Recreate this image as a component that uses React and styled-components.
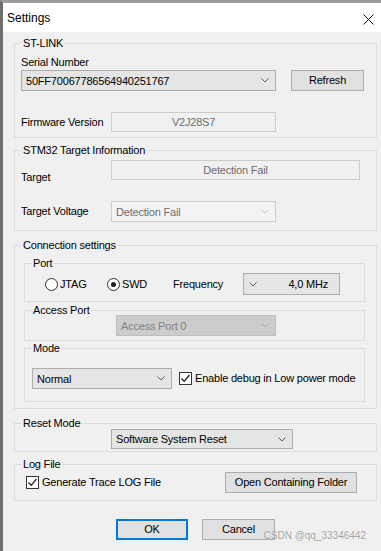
import React from "react";
import styled, { createGlobalStyle } from "styled-components";

const GlobalStyle = createGlobalStyle`
  html, body {
    margin: 0;
    padding: 0;
    background: #f0f0f0;
  }
  * {
    box-sizing: border-box;
  }
`;

const Chevron = ({ color = "#606060" }) => (
  <svg width="8" height="5" viewBox="0 0 8 5">
    <polyline points="0.5,0.5 4,4 7.5,0.5" fill="none" stroke={color} strokeWidth="1" />
  </svg>
);

const CheckMark = () => (
  <svg width="11" height="11" viewBox="0 0 11 11">
    <polyline points="1.5,5.5 4.2,8.3 9.5,2" fill="none" stroke="#222" strokeWidth="1.3" />
  </svg>
);

const App = () => {
  return (
    <>
      <GlobalStyle />
      <Window>
        <TitleBar>
          <Title>Settings</Title>
          <CloseIcon width="11" height="11" viewBox="0 0 11 11">
            <path d="M0.5 0.5 L10.5 10.5 M10.5 0.5 L0.5 10.5" stroke="#111" strokeWidth="1" />
          </CloseIcon>
        </TitleBar>

        <Content>
          {/* ST-LINK */}
          <Group $pad="12px 0 5px 6px">
            <Legend>ST-LINK</Legend>
            <Label>Serial Number</Label>
            <Row $mt={1} $gap={15}>
              <Combo $w={255} $h={21}>
                <ComboText>50FF70067786564940251767</ComboText>
                <Chevron />
              </Combo>
              <Button $w={73}>Refresh</Button>
            </Row>
            <Row $mt={21}>
              <Label $w={90}>Firmware Version</Label>
              <Field $w={165}>V2J28S7</Field>
            </Row>
          </Group>

          {/* STM32 */}
          <Group $mt={12} $pad="9px 0 8px 6px">
            <Legend>STM32 Target Information</Legend>
            <Row $align="flex-start" $h={20}>
              <Label $w={90} $mt={11}>Target</Label>
              <Field $w={249}>Detection Fail</Field>
            </Row>
            <Row $mt={21}>
              <Label $w={90}>Target Voltage</Label>
              <Combo $w={165} $h={21} $variant="disabled">
                <ComboText>Detection Fail</ComboText>
                <Chevron color="#c4c4c4" />
              </Combo>
            </Row>
          </Group>

          {/* Connection settings */}
          <Group $mt={14} $pad="17px 11px 6px 9px">
            <Legend>Connection settings</Legend>

            <Group $pad="9px 0 6px 20px">
              <Legend>Port</Legend>
              <RadioRow>
                <RadioItem>
                  <RadioCircle />
                  JTAG
                </RadioItem>
                <RadioItem>
                  <RadioCircle $checked />
                  SWD
                </RadioItem>
                <Label>Frequency</Label>
                <Combo $w={97} $h={22} $reverse>
                  <Chevron />
                  <ComboText>4,0 MHz</ComboText>
                </Combo>
              </RadioRow>
            </Group>

            <Group $mt={8} $pad="4px 0 4px 91px">
              <Legend>Access Port</Legend>
              <Combo $w={160} $h={21} $variant="dim">
                <ComboText>Access Port 0</ComboText>
                <Chevron color="#a8a8a8" />
              </Combo>
            </Group>

            <Group $mt={7} $pad="19px 0 12px 7px">
              <Legend>Mode</Legend>
              <Row $gap={7}>
                <Combo $w={140} $h={21}>
                  <ComboText>Normal</ComboText>
                  <Chevron />
                </Combo>
                <CheckLabel>
                  <CheckBox>
                    <CheckMark />
                  </CheckBox>
                  Enable debug in Low power mode
                </CheckLabel>
              </Row>
            </Group>
          </Group>

          {/* Reset Mode */}
          <Group $mt={14} $pad="5px 0 2px 96px">
            <Legend>Reset Mode</Legend>
            <Combo $w={182} $h={20}>
              <ComboText>Software System Reset</ComboText>
              <Chevron />
            </Combo>
          </Group>

          {/* Log File */}
          <Group $mt={12} $pad="7px 19px 7px 11px">
            <Legend>Log File</Legend>
            <Row $justify="space-between">
              <CheckLabel>
                <CheckBox>
                  <CheckMark />
                </CheckBox>
                Generate Trace LOG File
              </CheckLabel>
              <Button $w={132}>Open Containing Folder</Button>
            </Row>
          </Group>

          <Footer>
            <Button $w={72} $primary>OK</Button>
            <Button $w={73}>Cancel</Button>
          </Footer>
        </Content>

        <Watermark>CSDN @qq_33346442</Watermark>
      </Window>
    </>
  );
};

const Window = styled.div`
  position: relative;
  width: 381px;
  height: 551px;
  display: flex;
  flex-direction: column;
  background: #f0f0f0;
  border-left: 3px solid #6e6e6e;
  border-top: 3px solid #9c9c9c;
  font-family: "Liberation Sans", Arial, sans-serif;
  font-size: 11px;
  letter-spacing: -0.2px;
  color: #000;
  overflow: hidden;
`;

const TitleBar = styled.div`
  height: 29px;
  flex-shrink: 0;
  display: flex;
  align-items: center;
  justify-content: space-between;
  padding: 0 7px 0 4px;
  background: #fff;
`;

const Title = styled.div`
  font-size: 12px;
  letter-spacing: 0;
  line-height: 15px;
  margin-top: 2px;
`;

const CloseIcon = styled.svg`
  display: block;
  margin-top: 4px;
`;

const Content = styled.div`
  display: flex;
  flex-direction: column;
  padding: 11px 4px 0 11px;
`;

const Group = styled.div`
  position: relative;
  border: 1px solid #dcdcdc;
  margin-top: ${(p) => p.$mt || 0}px;
  padding: ${(p) => p.$pad};
`;

const Legend = styled.div`
  position: absolute;
  top: -7px;
  left: 7px;
  padding: 0 1px;
  line-height: 13px;
  background: #f0f0f0;
`;

const Row = styled.div`
  display: flex;
  align-items: ${(p) => p.$align || "center"};
  justify-content: ${(p) => p.$justify || "flex-start"};
  gap: ${(p) => p.$gap || 0}px;
  margin-top: ${(p) => p.$mt || 0}px;
  height: ${(p) => (p.$h ? `${p.$h}px` : "auto")};
`;

const Label = styled.div`
  width: ${(p) => (p.$w ? `${p.$w}px` : "auto")};
  flex-shrink: 0;
  margin-top: ${(p) => p.$mt || 0}px;
  line-height: 13px;
  white-space: nowrap;
`;

const comboColors = {
  normal: { bg: "#e5e5e5", border: "#adadad", text: "#000" },
  disabled: { bg: "#f3f3f3", border: "#cccccc", text: "#6d6d6d" },
  dim: { bg: "#cccccc", border: "#bfbfbf", text: "#838383" },
};

const Combo = styled.div`
  width: ${(p) => p.$w}px;
  height: ${(p) => p.$h}px;
  flex-shrink: 0;
  display: flex;
  align-items: center;
  justify-content: space-between;
  padding: ${(p) => (p.$reverse ? "0 11px 0 5px" : "0 6px 0 4px")};
  background: ${(p) => comboColors[p.$variant || "normal"].bg};
  border: 1px solid ${(p) => comboColors[p.$variant || "normal"].border};
  color: ${(p) => comboColors[p.$variant || "normal"].text};

  svg {
    display: block;
  }
`;

const ComboText = styled.span`
  line-height: 13px;
  white-space: nowrap;
  margin-top: 1px;
`;

const Field = styled.div`
  width: ${(p) => p.$w}px;
  height: 20px;
  display: flex;
  align-items: center;
  justify-content: center;
  border: 1px solid #cccccc;
  background: #f0f0f0;
  color: #6d6d6d;
  line-height: 13px;
`;

const Button = styled.div`
  width: ${(p) => p.$w}px;
  height: 21px;
  flex-shrink: 0;
  display: flex;
  align-items: center;
  justify-content: center;
  background: #e1e1e1;
  border: ${(p) => (p.$primary ? "2px solid #0078d7" : "1px solid #adadad")};
  line-height: 13px;
  white-space: nowrap;
`;

const RadioRow = styled.div`
  display: grid;
  grid-template-columns: 62px 66px 70px 97px;
  align-items: center;
`;

const RadioItem = styled.div`
  display: flex;
  align-items: center;
  gap: 2px;
  line-height: 13px;
`;

const RadioCircle = styled.span`
  position: relative;
  width: 13px;
  height: 13px;
  border-radius: 50%;
  border: 1px solid #333;
  background: #fff;

  &::after {
    content: "";
    display: ${(p) => (p.$checked ? "block" : "none")};
    position: absolute;
    left: 3px;
    top: 3px;
    width: 5px;
    height: 5px;
    border-radius: 50%;
    background: #222;
  }
`;

const CheckLabel = styled.div`
  display: flex;
  align-items: center;
  gap: 3px;
  line-height: 13px;
  white-space: nowrap;
`;

const CheckBox = styled.span`
  width: 13px;
  height: 13px;
  border: 1px solid #333;
  background: #fff;
  display: flex;
  align-items: center;
  justify-content: center;
`;

const Footer = styled.div`
  display: flex;
  gap: 14px;
  margin-top: 18px;
  padding-left: 102px;
`;

const Watermark = styled.div`
  position: absolute;
  right: 15px;
  bottom: 10px;
  font-size: 10px;
  letter-spacing: 0;
  color: rgba(140, 140, 140, 0.8);
  text-shadow: 0 0 1px rgba(255, 255, 255, 0.8);
`;

export default App;
